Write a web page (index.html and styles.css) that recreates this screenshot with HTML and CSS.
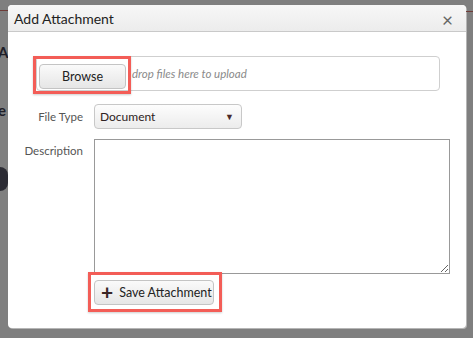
FILE: index.html
```html
<!DOCTYPE html>
<html lang="en">
<head>
  <meta charset="UTF-8" />
  <meta name="viewport" content="width=device-width, initial-scale=1.0" />
  <title>Add Attachment</title>
  <link rel="stylesheet" href="styles.css">
</head>
<body>
  <div class="backdrop">
    <div class="page-left">
      <span class="rule"></span>
      <span class="ghost ghost-a">A</span>
      <span class="ghost ghost-e">e</span>
      <span class="ghost-dot"></span>
    </div>
    <div class="dialog">
      <div class="dialog-header">
        <h1>Add Attachment</h1>
        <span class="close">&times;</span>
      </div>
      <div class="dialog-body">
        <div class="dropzone">
          <button class="btn btn-browse hl">Browse</button>
          <span class="drop-hint">drop files here to upload</span>
        </div>
        <div class="form-row">
          <label for="fileType">File Type</label>
          <div class="select-wrap">
            <select id="fileType">
              <option>Document</option>
              <option>Image</option>
              <option>Spreadsheet</option>
            </select>
            <span class="caret">&#9660;</span>
          </div>
        </div>
        <div class="form-row">
          <label for="description">Description</label>
          <textarea id="description"></textarea>
        </div>
        <div class="form-actions">
          <button class="btn btn-save hl"><span class="plus">+</span>Save Attachment</button>
        </div>
      </div>
    </div>
    <div class="page-right">
      <span class="rule"></span>
    </div>
  </div>
</body>
</html>
```

FILE: styles.css
```css
* { box-sizing: border-box; }
html, body { margin: 0; padding: 0; }
body { background: #7f7f7f; font-family: Lato, 'Open Sans', sans-serif; color: #333; width: 473px; height: 338px; overflow: hidden; }
.backdrop { display: flex; height: 338px; padding-top: 5px; }
.page-left { width: 8px; flex: none; position: relative; overflow: hidden; }
.page-right { width: 7px; flex: none; position: relative; }
.rule { display: block; height: 1px; background: #6e3c38; margin-top: 5px; }
.page-right .rule { margin-top: 6px; }
.ghost { position: absolute; left: -2px; font-weight: bold; font-size: 15px; color: #1e1e28; }
.ghost-a { top: 38px; }
.ghost-e { top: 96px; }
.ghost-dot { position: absolute; left: -8px; top: 162px; width: 16px; height: 24px; border-radius: 8px; background: #2c2c34; }

.dialog { width: 458px; height: 323px; flex: none; background: #fff; border-radius: 4px; box-shadow: 1px 1px 0 #b5b5b5; overflow: hidden; }
.dialog-header { height: 27px; display: flex; align-items: center; justify-content: space-between; padding: 0 13px 0 6px; background: linear-gradient(#f7f7f7, #ececec); border-bottom: 1px solid #c9c9c9; }
.dialog-header h1 { margin: 0; font-size: 14px; font-weight: normal; color: #222; }
.close { font-size: 19px; color: #666; line-height: 1; margin-top: 2px; }

.dialog-body { padding: 24px 0 0 28px; }
.dropzone { width: 404px; height: 35px; border: 1px solid #cfcfcf; border-radius: 4px; display: flex; align-items: center; padding-left: 2px; }
.drop-hint { font-style: italic; font-size: 11.5px; color: #8a8a8a; margin-left: 6px; }

.btn { font-family: inherit; font-size: 12.5px; color: #222; background: linear-gradient(#fafafa, #e6e6e6); border: 1px solid #c4c4c4; border-radius: 4px; height: 25px; padding: 0; cursor: pointer; white-space: nowrap; position: relative; }
.hl::after { content: ''; position: absolute; border: 3px solid #f35d57; box-shadow: 0 1px 2px rgba(0, 0, 0, 0.2); pointer-events: none; }
.btn-browse { width: 87px; margin-top: 5px; }
.btn-browse::after { top: -9px; left: -7px; right: -6px; bottom: -6px; }
.btn-save { width: 120px; display: flex; align-items: center; padding-left: 6px; }
.btn-save::after { top: -9px; left: -7px; right: -9px; bottom: -8px; }
.plus { font-size: 21px; font-weight: bold; line-height: 1; color: #3a2626; margin-right: 6px; margin-top: -2px; }

.form-row { display: flex; align-items: flex-start; margin-left: -28px; }
.form-row label { width: 75px; text-align: right; font-size: 11.5px; color: #555; margin-right: 11px; }
.form-row:nth-of-type(2) { margin-top: 13px; align-items: center; }
.form-row:nth-of-type(3) { margin-top: 10px; }
.form-row:nth-of-type(3) label { margin-top: 5px; }
.select-wrap { position: relative; }
select { appearance: none; -webkit-appearance: none; width: 148px; height: 25px; font-family: inherit; font-size: 12px; color: #2e2222; padding: 0 0 0 5px; border: 1px solid #c8c8c8; border-radius: 4px; background: linear-gradient(#fdfdfd, #ececec); }
.caret { position: absolute; right: 8px; top: 7px; font-size: 9px; color: #4a2a2a; pointer-events: none; }
textarea { width: 356px; height: 135px; border: 1px solid #999; resize: both; margin: 0; font-family: inherit; }

.form-actions { padding: 6px 0 0 58px; }
```
